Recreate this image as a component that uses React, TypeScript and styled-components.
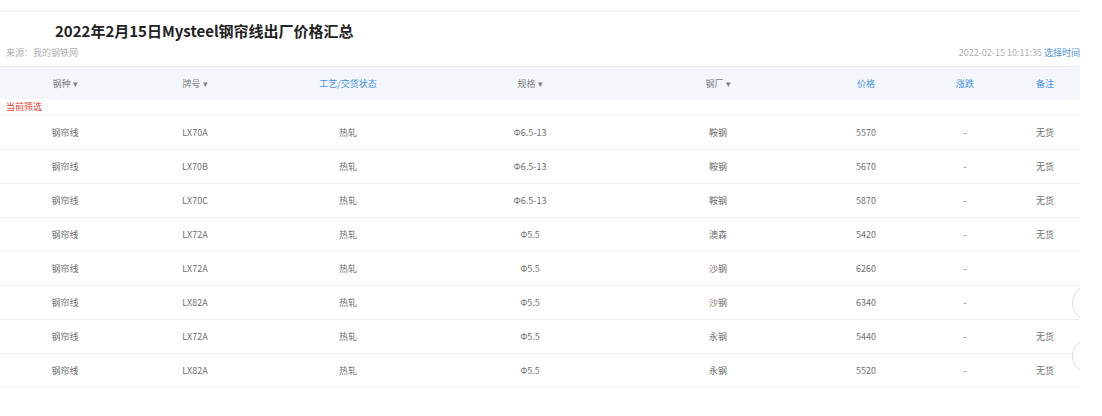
import React from "react";
import styled, { createGlobalStyle } from "styled-components";

const Global = createGlobalStyle`
  body { margin: 0; background: #fff; font-family: "Noto Sans CJK SC", "Noto Sans", sans-serif; }
`;

const Page = styled.div`
  width: 1080px; height: 416px; position: relative; overflow: hidden;
  padding-top: 10px; box-sizing: border-box;
`;
const TopLine = styled.div`height: 2px; background: #f2f5fa;`;
const Title = styled.h1`
  margin: 8px 0 0 55px; font-size: 15px; font-weight: 700; color: #222; line-height: 22px;
`;
const Meta = styled.div`
  display: flex; justify-content: space-between; padding: 4px 0 0 6px; font-size: 9px; color: #b0b0b0; line-height: 14px;
`;
const Blue = styled.span`color: #4a8fe0;`;
const cols = "130px 130px 176px 188px 188px 108px 90px 70px";
const Head = styled.div`
  display: grid; grid-template-columns: ${cols}; height: 32px; align-items: center;
  margin-top: 6px; background: #f3f7fc; border-top: 1px solid #e8eef6; font-size: 9px;
`;
const HCell = styled.div<{ $blue?: boolean }>`
  text-align: center; color: ${p => (p.$blue ? "#4a8fe0" : "#808080")};
`;
const Filter = styled.div`
  color: #e03a2e; font-size: 9px; padding-left: 6px; height: 16px; line-height: 16px; border-bottom: 1px solid #f0f0f0;
`;
const Row = styled.div`
  display: grid; grid-template-columns: ${cols}; height: 33px; align-items: center;
  border-bottom: 1px solid #f0f0f0; font-size: 9px; color: #707070;
`;
const Cell = styled.div`text-align: center;`;
const Circle = styled.div<{ $top: number }>`
  position: absolute; left: 1072px; top: ${p => p.$top}px; width: 34px; height: 34px;
  border-radius: 50%; border: 1px solid #ddd; background: #fff;
`;

const rows = [
  ["LX70A", "Φ6.5-13", "鞍钢", "5570", "无货"],
  ["LX70B", "Φ6.5-13", "鞍钢", "5670", "无货"],
  ["LX70C", "Φ6.5-13", "鞍钢", "5870", "无货"],
  ["LX72A", "Φ5.5", "澳森", "5420", "无货"],
  ["LX72A", "Φ5.5", "沙钢", "6260", ""],
  ["LX82A", "Φ5.5", "沙钢", "6340", ""],
  ["LX72A", "Φ5.5", "永钢", "5440", "无货"],
  ["LX82A", "Φ5.5", "永钢", "5520", "无货"],
];

export default function App() {
  return (
    <Page>
      <Global />
      <TopLine />
      <Title>2022年2月15日Mysteel钢帘线出厂价格汇总</Title>
      <Meta>
        <span>来源：我的钢铁网</span>
        <span>2022-02-15 10:11:35 <Blue>选择时间</Blue></span>
      </Meta>
      <Head>
        <HCell>钢种 ▾</HCell>
        <HCell>牌号 ▾</HCell>
        <HCell $blue>工艺/交货状态</HCell>
        <HCell>规格 ▾</HCell>
        <HCell>钢厂 ▾</HCell>
        <HCell $blue>价格</HCell>
        <HCell $blue>涨跌</HCell>
        <HCell $blue>备注</HCell>
      </Head>
      <Filter>当前筛选</Filter>
      {rows.map((r, i) => (
        <Row key={i}>
          <Cell>钢帘线</Cell>
          <Cell>{r[0]}</Cell>
          <Cell>热轧</Cell>
          <Cell>{r[1]}</Cell>
          <Cell>{r[2]}</Cell>
          <Cell>{r[3]}</Cell>
          <Cell>-</Cell>
          <Cell>{r[4]}</Cell>
        </Row>
      ))}
      <Circle $top={285} />
      <Circle $top={338} />
    </Page>
  );
}
